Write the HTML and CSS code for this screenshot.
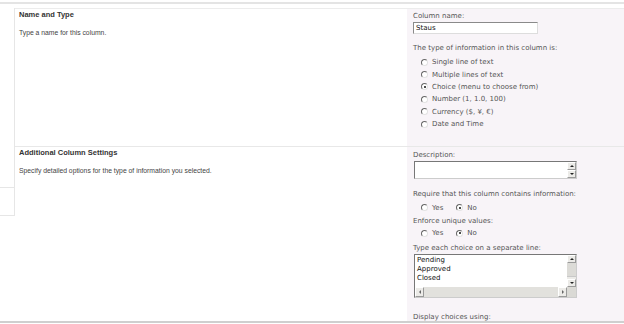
FILE: index.html
```html
<!DOCTYPE html>
<html lang="en">
<head>
    <meta charset="UTF-8">
    <title>Change Column</title>
    <link rel="stylesheet" href="styles.css">
</head>
<body>
    <div class="topline"></div>

    <div class="page">
        <div class="gutter">
            <div class="gutter-top"></div>
            <div class="gutter-box"></div>
        </div>

        <div class="sections">
            <!-- Name and Type -->
            <div class="section first">
                <div class="desc">
                    <h3>Name and Type</h3>
                    <p>Type a name for this column.</p>
                </div>
                <div class="fields">
                    <div class="label">Column name:</div>
                    <div class="input name-input">Staus</div>

                    <div class="label gap-9">The type of information in this column is:</div>
                    <div class="options">
                        <div class="opt"><span class="radio"></span>Single line of text</div>
                        <div class="opt"><span class="radio"></span>Multiple lines of text</div>
                        <div class="opt"><span class="radio checked"></span>Choice (menu to choose from)</div>
                        <div class="opt"><span class="radio"></span>Number (1, 1.0, 100)</div>
                        <div class="opt"><span class="radio"></span>Currency ($, ¥, €)</div>
                        <div class="opt"><span class="radio"></span>Date and Time</div>
                    </div>
                </div>
            </div>

            <!-- Additional Column Settings -->
            <div class="section second">
                <div class="desc">
                    <h3>Additional Column Settings</h3>
                    <p>Specify detailed options for the type of information you selected.</p>
                </div>
                <div class="fields">
                    <div class="label">Description:</div>
                    <div class="textbox small">
                        <div class="text"></div>
                        <div class="vscroll">
                            <div class="sbtn"><span class="arrow up"></span></div>
                            <div class="strack"></div>
                            <div class="sbtn"><span class="arrow down"></span></div>
                        </div>
                    </div>

                    <div class="label gap-10">Require that this column contains information:</div>
                    <div class="yesno">
                        <div class="opt"><span class="radio"></span>Yes</div>
                        <div class="opt"><span class="radio checked"></span>No</div>
                    </div>

                    <div class="label gap-2">Enforce unique values:</div>
                    <div class="yesno tight">
                        <div class="opt"><span class="radio"></span>Yes</div>
                        <div class="opt"><span class="radio checked"></span>No</div>
                    </div>

                    <div class="label gap-3">Type each choice on a separate line:</div>
                    <div class="textbox choices">
                        <div class="choice-main">
                            <div class="text">Pending<br>Approved<br>Closed</div>
                            <div class="vscroll">
                                <div class="sbtn"><span class="arrow up"></span></div>
                                <div class="strack"><div class="thumb"></div></div>
                                <div class="sbtn"><span class="arrow down"></span></div>
                            </div>
                        </div>
                        <div class="hscroll">
                            <div class="sbtn"><span class="arrow left"></span></div>
                            <div class="htrack"></div>
                            <div class="sbtn"><span class="arrow right"></span></div>
                            <div class="corner"></div>
                        </div>
                    </div>

                    <div class="label gap-14">Display choices using:</div>
                </div>
            </div>
        </div>
    </div>

    <div class="bottomline"></div>
</body>
</html>
```

FILE: styles.css
```css
body {
    margin: 0;
    background: #fff;
    font-family: "DejaVu Sans", Verdana, sans-serif;
    font-size: 7px;
    color: #555;
    overflow: hidden;
}
.topline {
    height: 2px;
    margin-top: 2px;
    background: #e4e4e4;
}
.page {
    display: flex;
    margin-top: 4px;
}
.gutter {
    width: 15px;
    flex: none;
}
.gutter-top {
    height: 179px;
    border-right: 1px solid #e6e6e6;
}
.gutter-box {
    height: 27px;
    border-top: 1px solid #e6e6e6;
    border-right: 1px solid #e6e6e6;
    border-bottom: 1px solid #e6e6e6;
}
.sections {
    flex: 1;
    border-top: 1px solid #ececec;
}
.section {
    display: flex;
}
.section.first { height: 137px; }
.section.second {
    height: 174px;
    border-top: 1px solid #e8e8e8;
}
.desc {
    flex: 1;
    padding: 0 4px;
    font-family: "Liberation Sans", Tahoma, sans-serif;
    color: #444;
}
.desc h3 {
    margin: 0;
    font-size: 7.5px;
    line-height: 11px;
    color: #333;
}
.desc p {
    margin: 7px 0 0;
    font-size: 6.8px;
    line-height: 11px;
}
.fields {
    width: 211px;
    flex: none;
    padding: 2px 0 0 6px;
    background: #f8f4f8;
}
.second .fields { padding-top: 3px; }
.label {
    line-height: 11px;
    white-space: nowrap;
}
.gap-2 { margin-top: 2px; }
.gap-3 { margin-top: 3.5px; }
.gap-9 { margin-top: 9px; }
.gap-10 { margin-top: 10px; }
.gap-14 { margin-top: 14px; }
.input {
    box-sizing: border-box;
    height: 12px;
    background: #fff;
    border: 1px solid #8a8a8a;
    border-right-color: #ddd;
    border-bottom-color: #ddd;
    color: #111;
    line-height: 10px;
    padding-left: 2px;
}
.name-input { width: 125px; }
.options {
    padding-left: 8px;
    margin-top: 2px;
}
.opt {
    display: flex;
    align-items: center;
    height: 12.4px;
    white-space: nowrap;
}
.radio {
    box-sizing: border-box;
    width: 7px;
    height: 7px;
    margin-right: 4px;
    border-radius: 50%;
    border: 1px solid #666;
    border-right-color: #e2e2e2;
    border-bottom-color: #e2e2e2;
    background: #fff;
    position: relative;
}
.radio.checked::after {
    content: "";
    position: absolute;
    left: 1.5px;
    top: 1.5px;
    width: 2px;
    height: 2px;
    border-radius: 50%;
    background: #111;
}
.yesno {
    display: flex;
    gap: 13px;
    padding-left: 8px;
    margin-top: 1.5px;
}
.yesno.tight { margin-top: 0.5px; }
.yesno .opt { height: 12px; }
.textbox {
    box-sizing: border-box;
    width: 163px;
    background: #fff;
    border: 1px solid #777;
    border-right-color: #ccc;
    border-bottom-color: #ccc;
    margin-left: 1px;
}
.textbox.small {
    height: 18px;
    display: flex;
}
.textbox .text {
    flex: 1;
    color: #111;
    padding: 0 2px;
    line-height: 9px;
}
.vscroll {
    width: 9px;
    display: flex;
    flex-direction: column;
    background: #ecebe8;
}
.strack { flex: 1; }
.sbtn {
    box-sizing: border-box;
    height: 8px;
    width: 9px;
    background: #ecebe8;
    border: 1px solid #fff;
    border-right-color: #9a9a9a;
    border-bottom-color: #9a9a9a;
    display: flex;
    align-items: center;
    justify-content: center;
    flex: none;
}
.arrow {
    width: 0;
    height: 0;
    border: 2px solid transparent;
}
.arrow.up { border-bottom-color: #222; border-top-width: 0; }
.arrow.down { border-top-color: #222; border-bottom-width: 0; }
.arrow.left { border-right-color: #666; border-left-width: 0; }
.arrow.right { border-left-color: #666; border-right-width: 0; }
.textbox.choices { height: 44px; }
.choice-main {
    display: flex;
    height: 32px;
}
.choice-main .text { padding-top: 1px; }
.thumb {
    height: 13px;
    background: #dcdbd7;
    border-bottom: 1px solid #c8c8c8;
}
.hscroll {
    display: flex;
    height: 10px;
    background: #e2e1dd;
}
.hscroll .sbtn { height: 10px; }
.htrack { flex: 1; }
.corner {
    width: 9px;
    background: #dad9d5;
}
.bottomline {
    height: 2px;
    background: #cfcfcf;
}
```
